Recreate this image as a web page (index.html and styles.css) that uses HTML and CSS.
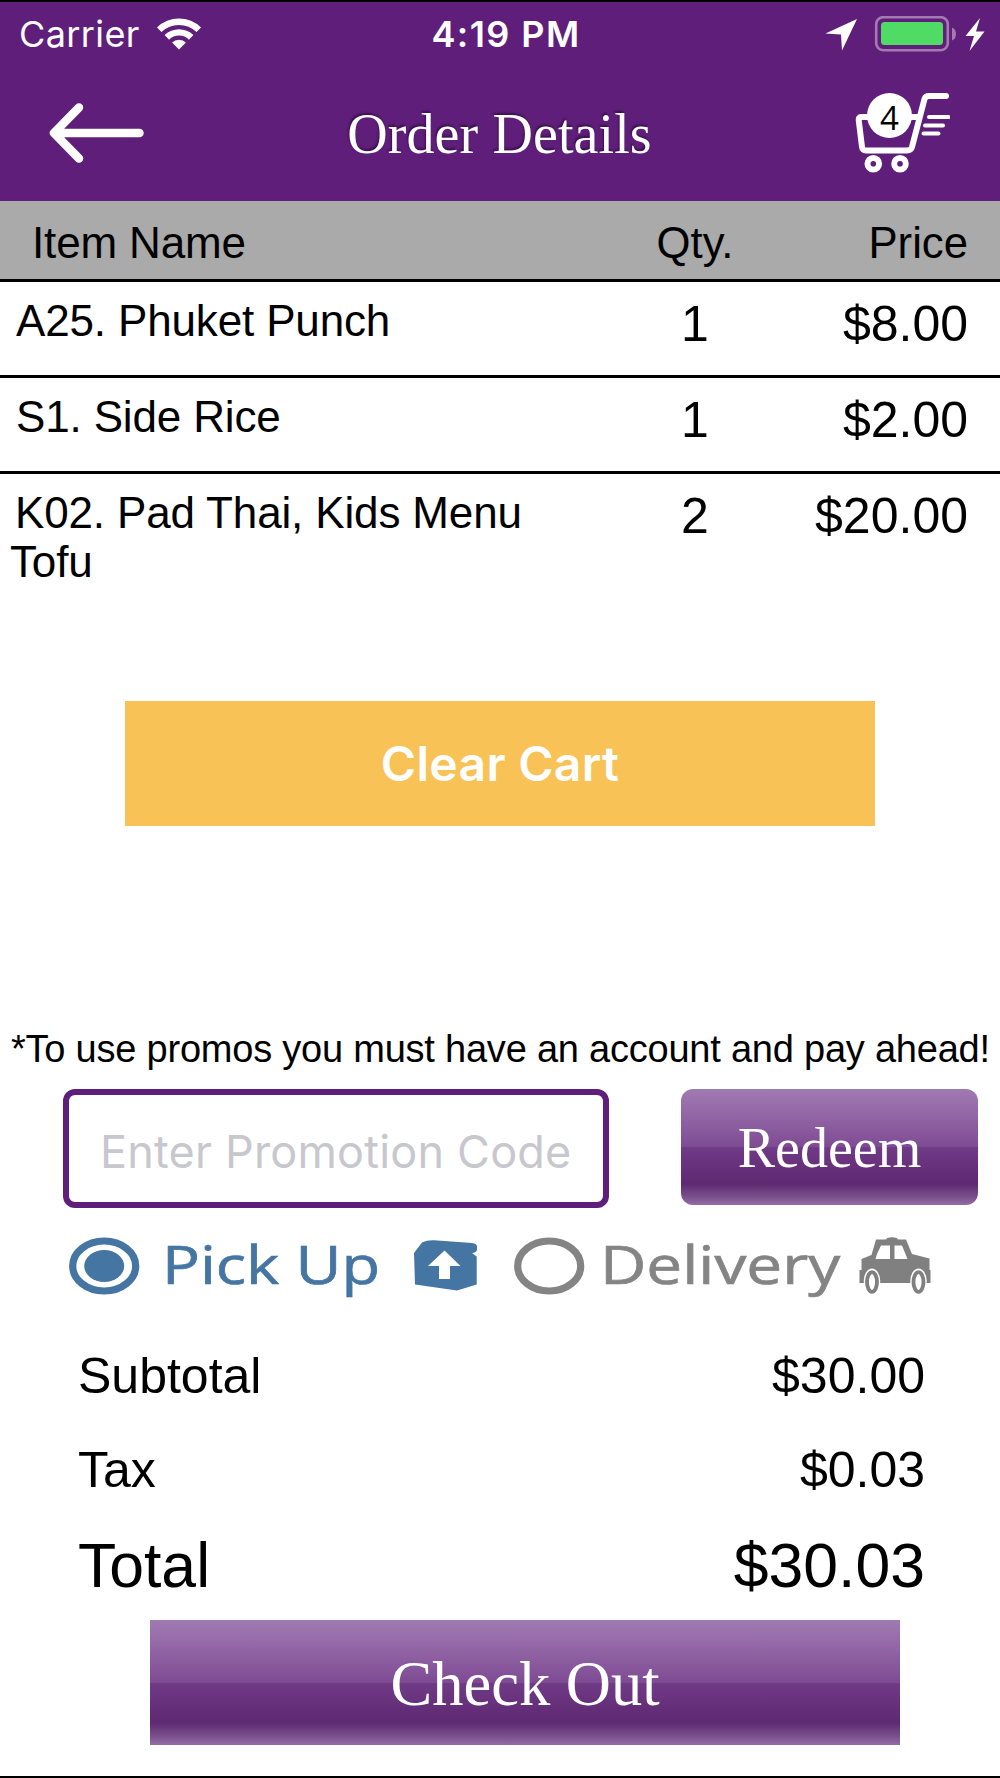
FILE: index.html
```html
<!DOCTYPE html>
<html lang="en">
<head>
<meta charset="utf-8">
<title>Order Details</title>
<link rel="stylesheet" href="styles.css">
</head>
<body>
<div class="screen">
  <header class="header">
    <div class="status">
      <div class="status-left">
        <span class="carrier">Carrier</span>
        <svg class="wifi" width="44" height="32" viewBox="0 0 44 32" fill="#fff">
          <path d="M0 9.5A31.5 31.5 0 0 1 44 9.500L39.500 14.100A25 25 0 0 0 4.500 14.100Z"/>
          <path d="M7.600 17.100A20.500 20.500 0 0 1 36.400 17.100L31.900 21.700A14 14 0 0 0 12.100 21.700Z"/>
          <path d="M15.100 24.600A9.800 9.800 0 0 1 28.900 24.600L22 31.600Z"/>
        </svg>
      </div>
      <span class="time">4:19 PM</span>
      <svg class="status-icons" width="160" height="36" viewBox="825 15 160 36">
        <path d="M825.500 32.500L857 18L842 49.500L841 33.500Z" fill="#fff"/>
        <rect x="876.200" y="16.200" width="71.600" height="33" rx="7" fill="none" stroke="#a37bb2" stroke-width="2.600"/>
        <rect x="881" y="21" width="62" height="23" rx="3.500" fill="#4fdb64"/>
        <path d="M952 26.500Q956 28 956 33Q956 38 952 39.500Z" fill="#a37bb2"/>
        <path d="M980 17L965.500 35H974L969.500 50L984.500 30.500H976Z" fill="#fff"/>
      </svg>
    </div>
    <div class="nav">
      <svg class="back" width="96" height="60" viewBox="0 0 96 60" fill="none" stroke="#fff" stroke-width="8.500" stroke-linecap="round" stroke-linejoin="round">
        <path d="M90.500 30H6M30 4.500L5 30L30 55.500"/>
      </svg>
      <h1 class="title">Order Details</h1>
      <div class="cart">
        <svg width="95" height="82" viewBox="855 92 95 82" fill="none" stroke="#fff" stroke-linecap="round" stroke-linejoin="round">
          <path d="M917 117H861Q858.500 117 858.700 120L862 147Q862.500 150.500 866 150.500H907Q911 150.500 912 147L924.500 99Q925.500 96 929 96H946" stroke-width="6"/>
          <path d="M929 117H948.500M925 125.500H943M923.500 133.500H938.500" stroke-width="4"/>
          <circle cx="873.300" cy="163.800" r="5.800" stroke-width="6"/>
          <circle cx="900" cy="163.800" r="5.800" stroke-width="6"/>
        </svg>
        <span class="badge">4</span>
      </div>
    </div>
  </header>

  <section class="items">
    <div class="row head"><span class="name">Item Name</span><span class="qty">Qty.</span><span class="price">Price</span></div>
    <div class="row"><span class="name">A25. Phuket Punch</span><span class="qty">1</span><span class="price">$8.00</span></div>
    <div class="row"><span class="name">S1. Side Rice</span><span class="qty">1</span><span class="price">$2.00</span></div>
    <div class="row last"><span class="name">K02. Pad Thai, Kids Menu<br>Tofu</span><span class="qty">2</span><span class="price">$20.00</span></div>
  </section>

  <button class="clear">Clear Cart</button>

  <p class="note">*To use promos you must have an account and pay ahead!</p>
  <div class="promo">
    <div class="code"><span>Enter Promotion Code</span></div>
    <button class="glossy redeem">Redeem</button>
  </div>

  <div class="methods">
    <svg width="71" height="58" viewBox="0 0 71 58" fill="#4575a2">
      <ellipse cx="35.200" cy="29" rx="31.500" ry="25" fill="none" stroke="#4575a2" stroke-width="7.200"/>
      <ellipse cx="35.200" cy="29" rx="20" ry="16"/>
    </svg>
    <span class="label pickup">Pick Up</span>
    <svg class="box" width="64" height="52" viewBox="413 1241 64 52">
      <path d="M414 1254L422 1243.500Q427 1241 434 1241.300L472 1244Q477 1244.500 477 1247.500V1251Q476 1254 472 1254L476.700 1257.500V1285.500L457 1291.500L415 1285.500Z" fill="#4575a2"/>
      <path d="M444.500 1251.500L460.500 1267H450V1280H439V1267H428Z" fill="#fff"/>
    </svg>
    <svg class="ring" width="71" height="58" viewBox="0 0 71 58" fill="none" stroke="#848484">
      <ellipse cx="35.200" cy="29" rx="31.500" ry="25" stroke-width="7.200"/>
    </svg>
    <span class="label delivery">Delivery</span>
    <svg class="car" width="72" height="58" viewBox="859 1238 72 58">
      <path d="M876 1240.500H886Q887 1238.300 892 1238.300Q897 1238.300 898 1240.500H906L912 1255L929.500 1259.500V1271H930.500V1284H859.500V1271H861.500V1260L871.500 1256Z" fill="#808080"/>
      <path d="M881 1246.500H890V1260H875.500L877 1255ZM894.500 1246.500H902L907.500 1260H894.500Z" fill="#fff"/>
      <ellipse cx="872" cy="1282" rx="8.300" ry="12.500" fill="#fff"/>
      <ellipse cx="918.500" cy="1282" rx="8.300" ry="12.500" fill="#fff"/>
      <path d="M879 1285H911.500V1288H879Z" fill="#fff"/>
      <ellipse cx="872" cy="1283" rx="5" ry="9.800" fill="none" stroke="#808080" stroke-width="3.800"/>
      <ellipse cx="918.500" cy="1283" rx="5" ry="9.800" fill="none" stroke="#808080" stroke-width="3.800"/>
    </svg>
  </div>

  <dl class="totals">
    <div class="sum"><dt>Subtotal</dt><dd>$30.00</dd></div>
    <div class="sum tax"><dt>Tax</dt><dd>$0.03</dd></div>
    <div class="sum grand"><dt>Total</dt><dd>$30.03</dd></div>
  </dl>
  <button class="glossy checkout">Check Out</button>
</div>
</body>
</html>
```
FILE: styles.css
```css
* { box-sizing: border-box; }

body {
  margin: 0;
  background: #fff;
  color: #000;
  font-family: "Liberation Sans", Arial, sans-serif;
}

h1, p, dl, dd { margin: 0; font-weight: 400; }

button { border: 0; padding: 0; color: #fff; }

.screen {
  display: flex;
  flex-direction: column;
  width: 1000px;
  height: 1778px;
  border-top: 2px solid #000;
  border-bottom: 2px solid #000;
  overflow: hidden;
  white-space: nowrap;
}

.header {
  flex: none;
  height: 199px;
  background: #5f1e79;
  color: #fff;
}

.status {
  display: grid;
  grid-template-columns: 1fr auto 1fr;
  align-items: center;
  height: 64px;
  padding: 0 7px 0 19px;
  font-family: Inter, "Liberation Sans", sans-serif;
  font-size: 36px;
}

.status-left { display: flex; align-items: center; }

.carrier { width: 138px; letter-spacing: 0.4px; }

.time { font-weight: 600; letter-spacing: 1.4px; }

.status-icons { justify-self: end; margin-right: 8px; }

.nav {
  display: grid;
  grid-template-columns: 1fr auto 1fr;
  align-items: center;
  height: 134px;
  padding: 0 50px 0 49px;
}

.title {
  padding-top: 2px;
  font: 56px/64px "Liberation Serif", "Times New Roman", serif;
  letter-spacing: 0.1px;
  text-shadow: -1px -2px 2px rgba(20, 0, 35, 0.5);
}

.cart {
  position: relative;
  justify-self: end;
  height: 82px;
}

.badge {
  position: absolute;
  left: 12px;
  top: 1px;
  width: 45px;
  height: 45px;
  border-radius: 50%;
  background: #fff;
  color: #000;
  font: 33px/49px "Open Sans", sans-serif;
  text-align: center;
}

.row {
  display: grid;
  grid-template-columns: 593px 204px 1fr;
  height: 96px;
  padding: 13px 32px 0 0;
  border-bottom: 3px solid #000;
  font-size: 50px;
  line-height: 58px;
}

.name {
  margin-top: 1px;
  padding-left: 16px;
  font-size: 44px;
  line-height: 49px;
  letter-spacing: -0.15px;
}

.qty { text-align: center; }

.price { text-align: right; }

.head {
  height: 81px;
  padding-top: 17px;
  background: #aaa;
  font-size: 43.7px;
  line-height: 49px;
}

.head .name { margin-top: 0; padding-left: 32px; }

.last { height: 227px; border: 0; }

.last .name { padding-left: 10px; text-indent: 5px; }

.clear {
  flex: none;
  width: 750px;
  height: 125px;
  margin: 0 125px;
  background: #f8c256;
  font: 600 48px/125px Inter, "Liberation Sans", sans-serif;
  letter-spacing: 0.3px;
}

.note {
  margin: 200px 0 0 11px;
  font-size: 38px;
  line-height: 46px;
  letter-spacing: -0.22px;
}

.promo {
  display: flex;
  justify-content: space-between;
  height: 120px;
  margin: 17px 22px 0 63px;
}

.code {
  display: flex;
  align-items: center;
  width: 546px;
  height: 119px;
  padding: 5px 0 0 31px;
  border: 6px solid #5f1e79;
  border-radius: 12px;
  color: #c7c7cd;
  font-family: Inter, "Liberation Sans", sans-serif;
  font-size: 45px;
  letter-spacing: 0.2px;
}

.glossy {
  background: linear-gradient(#a07ab2 0%, #9468a6 20%, #7e4b93 50%, #703b86 50.5%, #642d78 72%, #5e2a72 82%, #7a508c 93%, #966ca8 100%);
  font-family: "Liberation Serif", "Times New Roman", serif;
}

.redeem {
  width: 297px;
  height: 116px;
  padding-top: 2px;
  border-radius: 12px;
  font-size: 56px;
}

.methods {
  display: flex;
  align-items: center;
  height: 60px;
  margin: 27px 0 0 69px;
}

.label {
  padding-bottom: 4px;
  font-family: "Open Sans", sans-serif;
  font-size: 53px;
  line-height: 60px;
  -webkit-text-stroke: 0.7px currentColor;
  transform: scaleX(1.19);
  transform-origin: left;
}

.pickup { width: 251px; margin-left: 22px; color: #4575a2; }

.ring { margin-left: 37px; }

.delivery { width: 259px; margin-left: 15px; color: #848484; transform: scaleX(1.205); }

.totals { margin: 51px 75px 0 78px; }

.sum {
  display: flex;
  justify-content: space-between;
  height: 94px;
  font-size: 50px;
  line-height: 58px;
}

.tax { height: 88px; }

.grand { height: 91px; font-size: 62.5px; line-height: 72px; }

.checkout {
  flex: none;
  width: 750px;
  height: 125px;
  margin-left: 150px;
  padding-top: 4px;
  font-size: 62.5px;
}
```
